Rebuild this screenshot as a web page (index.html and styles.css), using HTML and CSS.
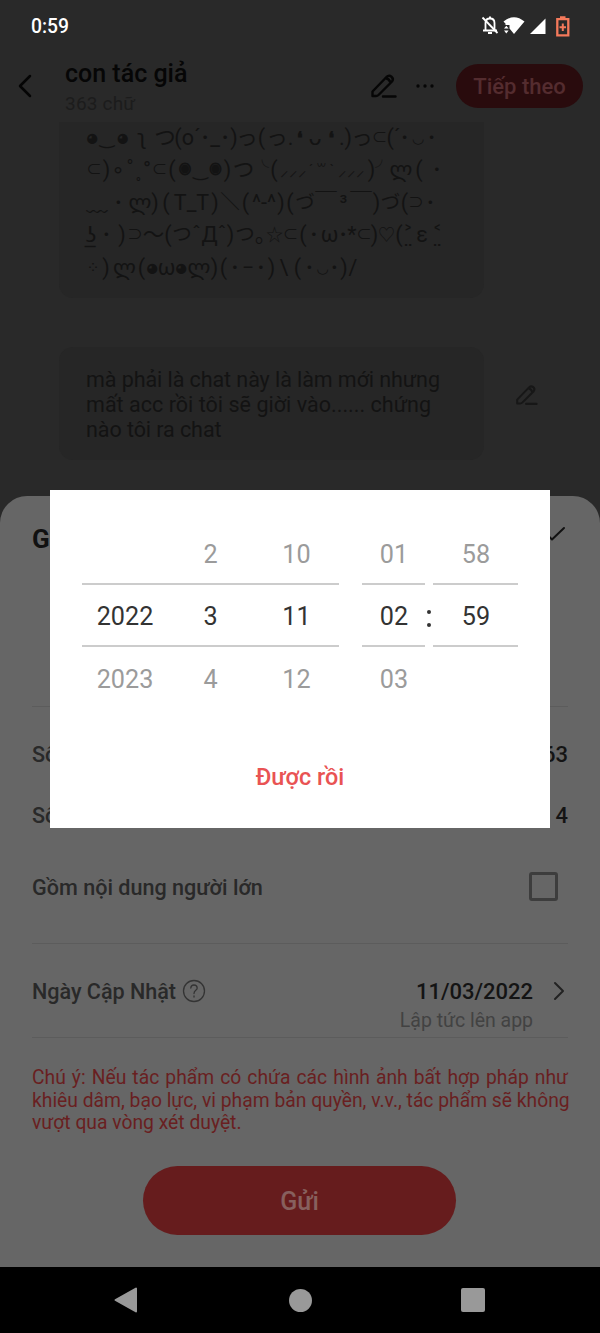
FILE: index.html
```
<!DOCTYPE html>
<html lang="vi">
<head>
<meta charset="utf-8">
<title>con tác giả</title>
<link rel="stylesheet" href="styles.css">
</head>
<body>
<div class="screen">
  <header class="statusbar">
    <span class="clock">0:59</span>
    <svg class="status-icons" width="92" height="24" viewBox="0 0 92 24">
      <g fill="none" stroke="#fff" stroke-width="1.800"><path d="M4.500 17V10Q4.500 5.500 9 5.500T13.500 10V17M2 17.500H16"/><path d="M1.500 4.500 16.500 20"/></g>
      <path d="M9 3.500v2.500M7 20h4" stroke="#fff" stroke-width="2"/>
      <path d="M22.500 8.500Q33 0 43.500 8.500L33 21 28.500 15.500V12H23.500L25 11.200Z" fill="#fff"/>
      <path d="M23 15.500 25.300 12.800 27.600 15.500ZM23 17.500H27.600L25.300 20.500Z" fill="#fff"/>
      <path d="M49 21 64.500 5.500V21Z" fill="#fff"/>
      <path d="M76.300 6.200H87.300V22.300H76.300ZM79 4.500H84.500" fill="none" stroke="#f4795b" stroke-width="2.300"/>
      <path d="M81.800 10.500V18M78.500 14.300H85" stroke="#f4795b" stroke-width="2"/>
    </svg>
  </header>
  <div class="appbar">
    <svg class="back" width="16" height="24" viewBox="0 0 16 24"><path d="M13 2 3 12 13 22"/></svg>
    <div class="titles"><h1>con tác giả</h1><p>363 chữ</p></div>
    <svg class="pen" width="27" height="26" viewBox="0 0 27 26"><path d="M2.500 23V18.500L16.500 4Q19 1.700 21.500 3.700T22 8.500L8.500 22Q7.500 23 6 23ZM15.500 5Q19 5.500 20.500 9.500M13 23.500H25.500"/></svg>
    <svg class="dots" width="20" height="6" viewBox="0 0 20 6"><circle cx="3" cy="3" r="1.700"/><circle cx="10" cy="3" r="1.700"/><circle cx="17" cy="3" r="1.700"/></svg>
    <button class="next">Tiếp theo</button>
  </div>
  <main class="chat">
    <div class="bubble kaomoji">
      <div class="k1"><span class="eye">◕</span><span class="smile">‿</span><span class="eye">◕</span><span>ʅ</span><span>つ</span><span>(o´</span><span>･</span><span>_</span><span>･</span><span>)</span><span>っ</span><span>(</span><span>っ</span><span>.</span><span class="quote">❛</span><span>ᴗ</span><span class="quote">❛</span><span>.)</span><span>っ</span><span class="half">⊂</span><span>(´</span><span>･</span><span class="sm">◡</span><span>･</span></div>
      <div class="k2"><span class="half">⊂</span><span>)</span><span>∘</span><span>˚</span><span>˳</span><span>°</span><span class="half">⊂</span><span>(</span><span class="eye">◉</span><span class="smile">‿</span><span class="eye">◉</span><span>)</span><span>つ</span><span class="arm">╰</span><span>(</span><span class="ticks">⸝⸝⸝</span><span class="sm">´</span><span class="sm">꒳</span><span class="sm">`</span><span class="ticks">⸝⸝⸝</span><span>)</span><span class="arm">╯</span><span>ლ</span><span>(</span><span>･</span></div>
      <div class="k3"><span>﹏</span><span>･</span><span>ლ</span><span>)</span><span>(</span><span>T_T</span><span>)</span><span class="kana">＼</span><span>(</span><span>^-^</span><span>)</span><span>(</span><span class="kana">づ</span><span>￣</span><span>³</span><span>￣</span><span>)</span><span class="kana">づ</span><span>(</span><span class="half">⊃</span><span>･</span></div>
      <div class="k4"><span>ʖ̲</span><span>･</span><span>)</span><span class="half">⊃</span><span>〜</span><span>(</span><span class="kana">つ</span><span>ˆ</span><span>Д</span><span>ˆ</span><span>)</span><span class="kana">つ</span><span>｡</span><span class="star">☆</span><span class="half">⊂</span><span>(</span><span>･</span><span>ω</span><span>･</span><span>*</span><span class="half">⊂</span><span>)</span><span class="star">♡</span><span>(</span><span>˃̤</span><span>ε</span><span>˂̤</span></div>
      <div class="k5"><span class="half">⁘</span><span>)</span><span>ლ</span><span>(</span><span class="eye">◕</span><span>ω</span><span class="eye">◕</span><span>ლ</span><span>)</span><span>(</span><span>･</span><span>−</span><span>･</span><span>)</span><span>\</span><span>(</span><span>･</span><span class="sm">◡</span><span>･</span><span>)</span><span>/</span></div>
    </div>
    <div class="row">
      <div class="bubble message"><div>mà phải là chat này là làm mới nhưng</div><div class="wide">mất acc rồi tôi sẽ giời vào...... chứng</div><div>nào tôi ra chat</div></div>
      <svg class="pen faint" width="23" height="22" viewBox="0 0 27 26"><path d="M2.500 23V18.500L16.500 4Q19 1.700 21.500 3.700T22 8.500L8.500 22Q7.500 23 6 23ZM15.500 5Q19 5.500 20.500 9.500M13 23.500H25.500"/></svg>
    </div>
  </main>
  <section class="sheet">
    <div class="sheet-head"><h2>Gửi</h2><svg width="22" height="16" viewBox="0 0 22 16"><path d="M2 7.500 8 13.500 20 2"/></svg></div>
    <div class="line stat"><span>Số chữ</span><b>363</b></div>
    <div class="stat"><span>Số chương</span><b>4</b></div>
    <div class="adult"><span>Gồm nội dung người lớn</span><i class="box"></i></div>
    <div class="line update">
      <span>Ngày Cập Nhật</span>
      <svg class="help" width="24" height="24" viewBox="0 0 24 24"><circle cx="12" cy="12" r="10.500"/><path d="M8.800 9Q9 6 12 6T15.200 9C15.200 11.500 12 11.200 12 14.500M12 17V18"/></svg>
      <div class="date"><b>11/03/2022</b><small>Lập tức lên app</small></div>
      <svg class="chev" width="12" height="20" viewBox="0 0 12 20"><path d="M2 2 10 10 2 18"/></svg>
    </div>
    <div class="line note"><div>Chú ý: Nếu tác phẩm có chứa các hình ảnh bất hợp pháp như</div><div>khiêu dâm, bạo lực, vi phạm bản quyền, v.v., tác phẩm sẽ không</div><div class="last">vượt qua vòng xét duyệt.</div></div>
    <button class="send">Gửi</button>
  </section>
  <nav class="navbar">
    <svg width="24" height="26" viewBox="0 0 24 26"><path d="M22 1.500V24.500L1.500 13Z" fill="#999" stroke="#999" stroke-width="2" stroke-linejoin="round"/></svg>
    <i class="home"></i><i class="recent"></i>
  </nav>
  <div class="dialog">
    <div class="picker">
      <div class="date-cols">
        <div class="col year"><span>&nbsp;</span><b>2022</b><span>2023</span></div>
        <div class="col month"><span>2</span><b>3</b><span>4</span></div>
        <div class="col day"><span>10</span><b>11</b><span>12</span></div>
      </div>
      <div class="col hour"><span>01</span><b>02</b><span>03</span></div>
      <div class="colon"><i></i><i></i></div>
      <div class="col minute"><span>58</span><b>59</b><span>&nbsp;</span></div>
    </div>
    <button class="ok">Được rồi</button>
  </div>
</div>
</body>
</html>
```
FILE: styles.css
```
* { box-sizing: border-box; }
body { margin: 0; font-family: Roboto, "Noto Sans CJK JP", "DejaVu Sans", sans-serif; }
h1, h2, p { margin: 0; }
button { border: 0; padding: 0; font: inherit; }
i { display: block; }
svg { flex: none; fill: none; stroke-linecap: round; stroke-linejoin: round; }
.screen { position: relative; width: 600px; height: 1333px; overflow: hidden; background: #292929; display: flex; flex-direction: column; }
.statusbar { height: 50px; padding: 12px 22px 0 31px; display: flex; justify-content: space-between; align-items: flex-start; color: #fff; }
.clock { font-size: 19.3px; line-height: 30px; font-weight: 500; }
.status-icons { stroke-linecap: butt; stroke-linejoin: miter; margin: 1px 5px 0 0; }
.appbar { height: 72px; padding: 0 17px; display: flex; align-items: center; }
.back { stroke: #050505; stroke-width: 2.5; margin-right: 32px; }
.titles { flex: 1; padding-top: 4px; }
.titles h1 { font-size: 25px; line-height: 30px; font-weight: 500; color: #060606; }
.titles p { font-size: 19px; line-height: 30px; margin-bottom: -2px; color: #1c1c1c; letter-spacing: .2px; }
.pen { stroke: #060606; stroke-width: 2.4; }
.dots { fill: #060606; margin: 0 21px 0 18px; }
.next { width: 127px; height: 44px; border-radius: 22px; background: #290b0d; color: #542c2f; font-size: 22px; font-weight: 500; }
.chat { height: 374px; padding-left: 59px; }
.bubble { width: 425px; background: #262626; color: #131313; white-space: nowrap; font-size: 21.5px; }
.kaomoji { height: 176px; border-radius: 0 0 14px 14px; padding: 0 27px; overflow: hidden; }
.kaomoji div { height: 32.4px; line-height: 32.4px; display: grid; }
.kaomoji span { justify-self: center; height: 32.4px; }
.kaomoji .eye { font-size: 12px; -webkit-text-stroke: 1px #131313; }
.kaomoji .quote { font-size: 17px; -webkit-text-stroke: 1px #131313; }
.kaomoji .smile { font-size: 18px; }
.kaomoji .sm { font-size: 14px; }
.kaomoji .half { font-size: 15.5px; }
.kaomoji .star { font-size: 17px; }
.kaomoji .arm { font-size: 14px; line-height: 26px; }
.kaomoji .kana { font-size: 19.5px; }
.kaomoji .ticks { font-size: 17px; }
.k1 { grid-template-columns: 12px 18px 13px 26px 20px 25px 10px 10px 10px 8px 18px 11px 20px 7px 12px 18px 15px 13px 20px 15px 13px 9px 18px 9px; }
.k2 { grid-template-columns: 16px 9px 14px 10px 7px 10px 15px 10px 16px 15px 15px 9px 23px 14px 10px 28px 8px 13px 8px 31px 9px 12px 26px 10px 26px; }
.k3 { grid-template-columns: 22px 21px 22px 8px 14px 37px 10px 20px 11px 26px 8px 10px 20px 22px 13px 22px 9px 19px 9px 14px 15px; }
.k4 { grid-template-columns: 10px 21px 10px 16px 21px 8px 20px 9px 17px 8px 9px 20px 11px 17px 15px 10px 12px 19px 8px 10px 14px 7px 17px 8px 10px 18px 12px; }
.k5 { grid-template-columns: 14px 12px 25px 9px 12px 17px 12px 24px 7px 11px 12px 14px 12px 9px 16px 11px 13px 13px 11px 8px 10px; }
.row { margin-top: 49px; display: flex; align-items: center; }
.message { height: 113px; border-radius: 14px; padding: 20px 27px; line-height: 25px; letter-spacing: -.07px; }
.wide { letter-spacing: .03px; }
.faint { stroke: #171717; margin: -17px 0 0 31px; }
.sheet { height: 771px; background: #666; border-radius: 27px 27px 0 0; padding: 0 32px; color: #292929; font-size: 21.6px; font-weight: 500; }
.sheet b { color: #141414; font-size: 22px; font-weight: 500; }
.line { border-top: 1px solid #5c5c5c; }
.sheet-head { height: 210px; padding-top: 26px; display: flex; justify-content: space-between; }
.sheet-head h2 { font-size: 26px; line-height: 34px; font-weight: 700; color: #111; }
.sheet-head svg { stroke: #111; stroke-width: 2; margin: 4px 2px 0 0; }
.stat { display: flex; justify-content: space-between; height: 62px; line-height: 32px; padding-top: 16px; }
.line.stat { height: 78px; padding-top: 32px; }
.adult { height: 97px; padding: 26px 10px 0 0; display: flex; justify-content: space-between; line-height: 32px; }
.box { width: 29px; height: 29px; border: 3px solid #3d3d3d; border-radius: 3px; }
.update { height: 94px; padding: 32px 3px 0 0; display: flex; align-items: flex-start; line-height: 32px; letter-spacing: -.03px; }
.help { stroke: #343434; stroke-width: 1.3; margin: 3px 0 0 6px; }
.date { margin-left: auto; text-align: right; display: flex; flex-direction: column; }
.date small { font-size: 19.5px; line-height: 26px; font-weight: 400; color: #424242; }
.chev { stroke: #222; stroke-width: 2; margin: 5px 0 0 20px; }
.note { height: 129px; padding-top: 29px; line-height: 22.5px; font-size: 19.3px; font-weight: 400; color: #691f21; white-space: nowrap; }
.note div { text-align-last: justify; }
.note .last { text-align-last: left; }
.send { display: block; width: 313px; height: 69px; border-radius: 35px; margin: 0 0 0 111px; padding-top: 2px; background: #661c1d; color: #87605e; font-size: 25px; font-weight: 500; }
.navbar { height: 66px; background: #000; display: flex; align-items: center; padding: 0 115px 0 114px; justify-content: space-between; }
.home { width: 23px; height: 23px; border-radius: 50%; background: #999; margin-left: 1px; }
.recent { width: 24px; height: 24px; border-radius: 2px; background: #999; }
.dialog { position: absolute; left: 50px; top: 490px; width: 500px; height: 338px; background: #fff; padding: 32px 32px 0; }
.picker { display: flex; height: 188px; }
.date-cols { display: flex; width: 257px; margin-right: 23px; }
.col { display: grid; grid-template-rows: 61px 64px 62px; align-items: center; text-align: center; font-size: 25.2px; color: #9b9b9b; }
.col span { padding-top: 3px; }
.col b { font-weight: 400; color: #333; border: solid #ccc; border-width: 2px 0; height: 64px; line-height: 64px; }
.year { width: 86px; }
.month { width: 85px; }
.day { width: 86px; text-indent: 1px; }
.hour { width: 63px; text-indent: 1px; }
.minute { width: 85px; text-indent: 1px; }
.colon { width: 8px; display: flex; flex-direction: column; justify-content: center; align-items: center; gap: 9px; padding-top: 4px; }
.colon i { width: 4px; height: 4px; border-radius: 50%; background: #333; }
.ok { display: block; margin: 51px auto 0; background: none; color: #e95353; font-size: 23.4px; line-height: 32px; font-weight: 500; }
```
